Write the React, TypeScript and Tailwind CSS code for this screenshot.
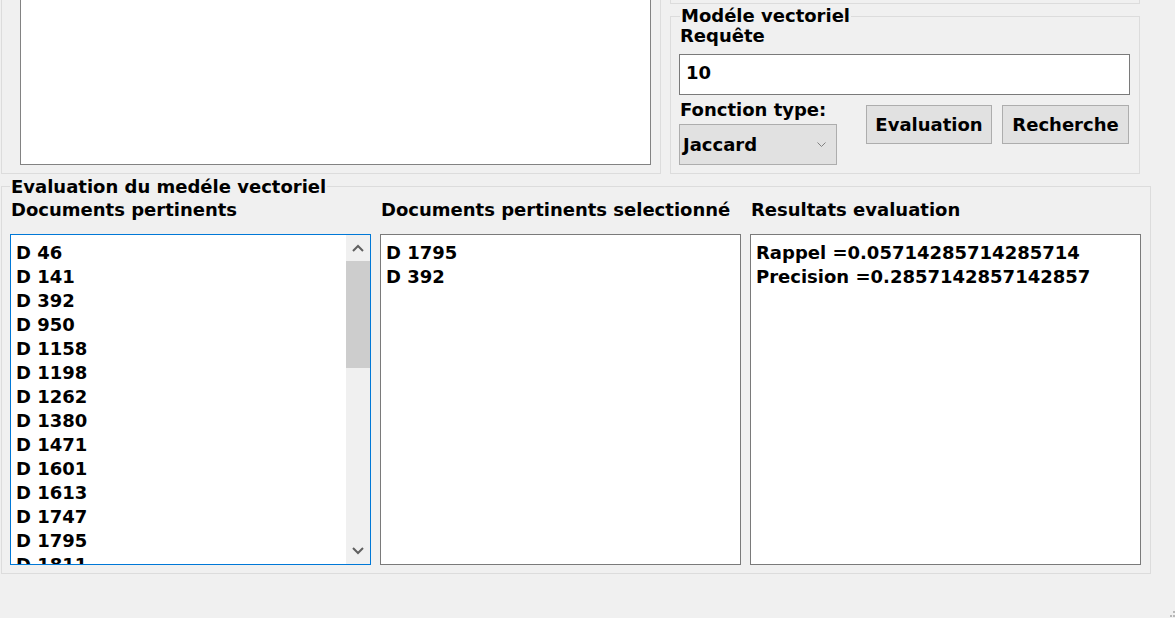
import React from "react";

const docs = ["D 46", "D 141", "D 392", "D 950", "D 1158", "D 1198", "D 1262", "D 1380", "D 1471", "D 1601", "D 1613", "D 1747", "D 1795", "D 1811"];

function Chevron({ up }: { up?: boolean }) {
    return (
        <svg width="12" height="8" viewBox="0 0 12 8">
            <polyline
                points={up ? "1,7 6,2 11,7" : "1,1 6,6 11,1"}
                fill="none"
                stroke="#606060"
                strokeWidth="2"
            />
        </svg>
    );
}

export default function App() {
    return (
        <div className="w-[1175px] h-[618px] bg-[#f0f0f0] overflow-hidden flex flex-col font-['DejaVu_Sans',Verdana,sans-serif] font-bold text-[18px] leading-[20px] text-black">
            {/* haut */}
            <div className="flex h-[174px]">
                <div className="ml-[1px] w-[660px] h-[174px] border-x border-b border-[#dcdcdc] pl-[18px]">
                    <div className="w-[631px] h-[165px] bg-white border-x border-b border-[#828282]"></div>
                </div>
                <div className="ml-[9px] w-[470px] flex flex-col">
                    <div className="h-[4px] border-x border-b border-[#dcdcdc]"></div>
                    <div className="mt-[12px] h-[158px] border border-[#dcdcdc] pl-[8px]">
                        <div className="-mt-[11px] ml-[1px] w-fit px-[1px] bg-[#f0f0f0]">Modéle vectoriel</div>
                        <div className="ml-[1px]">Requête</div>
                        <div className="mt-[8px] w-[451px] h-[41px] border border-[#7a7a7a] bg-white pl-[6px] pb-[4px] flex items-center">10</div>
                        <div className="flex mt-[5px]">
                            <div className="w-[158px]">
                                <div className="ml-[1px] whitespace-nowrap">Fonction type:</div>
                                <div className="mt-[4px] h-[41px] border border-[#adadad] bg-[#e1e1e1] pl-[3px] pr-[10px] flex items-center justify-between">
                                    <span>Jaccard</span>
                                    <svg width="9" height="5" viewBox="0 0 9 5">
                                        <polyline points="0.5,0.5 4.5,4.5 8.5,0.5" fill="none" stroke="#808080" strokeWidth="1" />
                                    </svg>
                                </div>
                            </div>
                            <button className="ml-[29px] mt-[5px] w-[126px] h-[39px] border border-[#adadad] bg-[#e1e1e1] font-bold">Evaluation</button>
                            <button className="ml-[10px] mt-[5px] w-[127px] h-[39px] border border-[#adadad] bg-[#e1e1e1] font-bold">Recherche</button>
                        </div>
                    </div>
                </div>
            </div>

            {/* evaluation */}
            <div className="ml-[1px] mt-[12px] w-[1150px] h-[388px] border border-[#dcdcdc] pl-[8px] pr-[9px]">
                <div className="-mt-[10px] w-fit px-[1px] bg-[#f0f0f0]">Evaluation du medéle vectoriel</div>
                <div className="flex gap-[9px] mt-[3px]">
                    <div className="w-[361px]">
                        <div className="pl-[1px]">Documents pertinents</div>
                        <div className="mt-[14px] h-[331px] border border-[#0078d7] bg-white flex">
                            <div className="flex-1 overflow-hidden pl-[5px] pt-[6px] leading-[24px]">
                                {docs.map((d) => (
                                    <div key={d}>{d}</div>
                                ))}
                            </div>
                            <div className="w-[24px] bg-[#f0f0f0] flex flex-col">
                                <div className="h-[26px] flex items-center justify-center"><Chevron up /></div>
                                <div className="h-[107px] bg-[#cdcdcd]"></div>
                                <div className="flex-1"></div>
                                <div className="h-[26px] flex items-center justify-center"><Chevron /></div>
                            </div>
                        </div>
                    </div>
                    <div className="w-[361px]">
                        <div className="pl-[1px] whitespace-nowrap">Documents pertinents selectionné</div>
                        <div className="mt-[14px] h-[331px] border border-[#7a7a7a] bg-white pl-[5px] pt-[6px] leading-[24px]">
                            <div>D 1795</div>
                            <div>D 392</div>
                        </div>
                    </div>
                    <div className="w-[391px]">
                        <div className="pl-[1px]">Resultats evaluation</div>
                        <div className="mt-[14px] h-[331px] border border-[#7a7a7a] bg-white pl-[5px] pt-[6px] leading-[24px]">
                            <div>Rappel =0.05714285714285714</div>
                            <div>Precision =0.2857142857142857</div>
                        </div>
                    </div>
                </div>
            </div>

            <div className="flex-1 flex items-end justify-end">
                <svg width="5" height="7" viewBox="0 0 5 7">
                    <rect x="3" y="0" width="2" height="2" fill="#b8b8b8" />
                    <rect x="0" y="4" width="2" height="2" fill="#b8b8b8" />
                    <rect x="3" y="4" width="2" height="2" fill="#b8b8b8" />
                </svg>
            </div>
        </div>
    );
}
